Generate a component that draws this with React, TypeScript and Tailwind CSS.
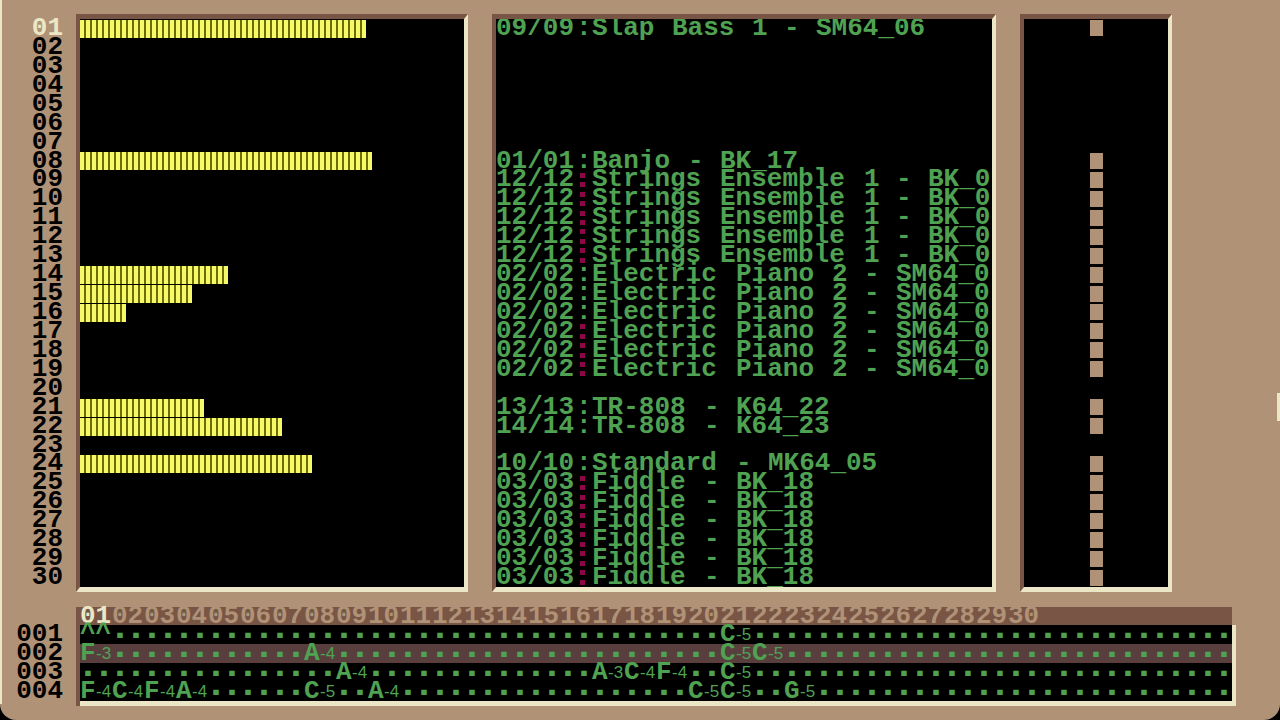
import React from "react";
import clsx from "clsx";

interface Channel {
  level?: number;
  program?: string;
  name?: string;
  layered?: boolean;
}

const strings: Channel = {
  program: "12/12",
  name: "Strings Ensemble 1 - BK_0",
  layered: true,
};
const piano: Channel = {
  program: "02/02",
  name: "Electric Piano 2 - SM64_0",
};
const fiddle: Channel = {
  program: "03/03",
  name: "Fiddle - BK_18",
  layered: true,
};

const channels: Channel[] = [
  { program: "09/09", name: "Slap Bass 1 - SM64_06", level: 48 },
  {},
  {},
  {},
  {},
  {},
  {},
  { program: "01/01", name: "Banjo - BK_17", level: 49 },
  strings,
  strings,
  strings,
  strings,
  strings,
  { ...piano, level: 25 },
  { ...piano, level: 19 },
  { ...piano, level: 8 },
  { ...piano, layered: true },
  { ...piano, layered: true },
  { ...piano, layered: true },
  {},
  { program: "13/13", name: "TR-808 - K64_22", level: 21 },
  { program: "14/14", name: "TR-808 - K64_23", level: 34 },
  {},
  { program: "10/10", name: "Standard - MK64_05", level: 39 },
  fiddle,
  fiddle,
  fiddle,
  fiddle,
  fiddle,
  fiddle,
];

const PATTERN_COLUMNS = 36;
const CELL_WIDTH = 16;

// notes are keyed by channel number
const pattern: Record<number, string>[] = [
  { 1: "^^", 21: "C-5" },
  { 1: "F-3", 8: "A-4", 21: "C-5", 22: "C-5" },
  { 9: "A-4", 17: "A-3", 18: "C-4", 19: "F-4", 21: "C-5" },
  {
    1: "F-4",
    2: "C-4",
    3: "F-4",
    4: "A-4",
    8: "C-5",
    10: "A-4",
    20: "C-5",
    21: "C-5",
    23: "G-5",
  },
];

const activeRow = 1;

const pad = (n: number, size: number) => String(n).padStart(size, "0");

interface PanelProps {
  label: string;
  children: React.ReactNode;
}

const Panel: React.FC<PanelProps> = ({ label, children }) => {
  return (
    <section
      aria-label={label}
      className="grid min-w-0 grid-rows-[repeat(30,minmax(18px,1fr))] overflow-hidden border-x-4 border-y-5 border-t-[#785545] border-r-[#ebe7c6] border-b-[#ebe7c6] border-l-[#785545] bg-black"
    >
      {children}
    </section>
  );
};

// every word starts on the 16px character grid
const CellText: React.FC<{ text: string }> = ({ text }) => {
  return (
    <span className="flex gap-4">
      {text.split(" ").map((word, i) => (
        <span
          key={i}
          className="shrink-0"
          style={{ width: word.length * CELL_WIDTH }}
        >
          {word}
        </span>
      ))}
    </span>
  );
};

const Instrument: React.FC<{ channel: Channel }> = ({ channel }) => {
  if (!channel.program || !channel.name) return <div />;
  return (
    <div className="flex min-w-0 whitespace-pre text-[#50a253]">
      <span className="w-20 shrink-0">{channel.program}</span>
      {channel.layered ? (
        <span className="flex w-4 shrink-0 flex-col items-center justify-around pr-1">
          <i className="h-[5px] w-[5px] bg-[#8f0648]" />
          <i className="h-[5px] w-[5px] bg-[#8f0648]" />
        </span>
      ) : (
        <span className="w-4 shrink-0">:</span>
      )}
      <CellText text={channel.name} />
    </div>
  );
};

const Note: React.FC<{ value?: string }> = ({ value }) => {
  if (!value) {
    return (
      <span className="grid h-[19px] grid-cols-2 text-center font-['DejaVu_Sans_Mono',monospace] text-[14px] font-normal">
        <span>▪</span>
        <span>▪</span>
      </span>
    );
  }
  if (value.length < 3) return <>{value}</>;
  return (
    <span className="flex">
      <span className="w-4">{value[0]}</span>
      <span className="font-['Liberation_Sans',sans-serif] text-[17px] font-normal">
        {value.slice(1)}
      </span>
    </span>
  );
};

const App: React.FC = () => {
  return (
    <div className="bg-black">
      <main className="relative flex min-h-screen flex-col gap-[15px] overflow-hidden rounded-b-2xl bg-[#b09277] py-3.5 font-['Liberation_Mono',monospace] text-[26px] leading-[19px] font-bold text-black">
        <div className="flex flex-1 pr-[108px] leading-[18px]">
          <ol className="grid w-[76px] shrink-0 grid-rows-[repeat(30,minmax(18px,1fr))] border-y-5 border-transparent pr-[13px] text-right">
            {channels.map((_, i) => (
              <li key={i} className={clsx(i === 0 && "text-[#ebe7c6]")}>
                {pad(i + 1, 2)}
              </li>
            ))}
          </ol>
          <div className="grid flex-1 grid-cols-[392fr_504fr_152fr] gap-6">
            <Panel label="Levels">
              {channels.map((channel, i) => (
                <div key={i} className="flex items-end">
                  {channel.level && (
                    <div
                      className="h-[18px] bg-[repeating-linear-gradient(90deg,#f6fa68_0px,#f6fa68_4px,#6c6c08_4px,#6c6c08_6px)]"
                      style={{ width: channel.level * 6 - 2 }}
                    />
                  )}
                </div>
              ))}
            </Panel>
            <Panel label="Instruments">
              {channels.map((channel, i) => (
                <Instrument key={i} channel={channel} />
              ))}
            </Panel>
            <Panel label="Panning">
              {channels.map((channel, i) => (
                <div key={i} className="flex items-center justify-center">
                  {channel.program && (
                    <div className="h-4 w-[13px] bg-[#b09277]" />
                  )}
                </div>
              ))}
            </Panel>
          </div>
        </div>

        <div className="pr-11">
          <table className="w-full table-fixed border-separate border-spacing-0">
            <colgroup>
              <col className="w-20" />
              <col span={PATTERN_COLUMNS} />
              <col className="w-1" />
            </colgroup>
            <thead>
              <tr className="h-[18px] leading-[18px]">
                <td className="border-r-4 border-[#785545] p-0" />
                {Array.from({ length: PATTERN_COLUMNS }, (_, i) => (
                  <th
                    key={i}
                    scope="col"
                    className={clsx(
                      "bg-[#785545] p-0 text-left",
                      i === 0 ? "text-[#ebe7c6]" : "text-[#b09277]"
                    )}
                  >
                    {i < channels.length && pad(i + 1, 2)}
                  </th>
                ))}
                <td className="p-0" />
              </tr>
            </thead>
            <tbody>
              {pattern.map((notes, row) => {
                const last = row === pattern.length - 1;
                return (
                  <tr key={row}>
                    <th
                      scope="row"
                      className="border-r-4 border-[#785545] p-0 pr-[13px] text-right align-top"
                    >
                      {pad(row + 1, 3)}
                    </th>
                    {Array.from({ length: PATTERN_COLUMNS }, (_, i) => (
                      <td
                        key={i}
                        className={clsx(
                          "border-[#ebe7c6] p-0 align-top whitespace-nowrap text-[#50a253]",
                          row === activeRow ? "bg-[#583f3e]" : "bg-black",
                          last && "border-b-5"
                        )}
                      >
                        <Note value={notes[i + 1]} />
                      </td>
                    ))}
                    <td className="bg-[#ebe7c6] p-0" />
                  </tr>
                );
              })}
            </tbody>
          </table>
        </div>

        <div className="absolute top-0 bottom-4 left-0 w-0.5 bg-[#ebe7c6]" />
        <div className="absolute top-[393px] right-0 h-7 w-[3px] bg-[#ebe7c6]" />
      </main>
    </div>
  );
};

export default App;
